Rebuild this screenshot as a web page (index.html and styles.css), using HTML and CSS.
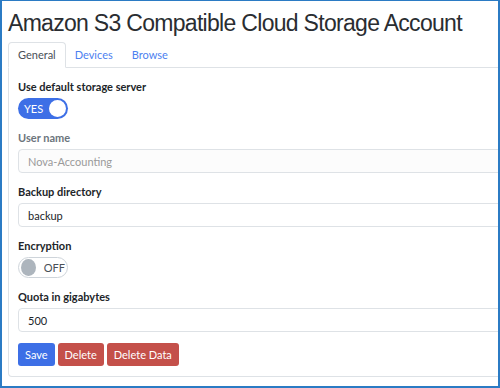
FILE: index.html
```html
<!DOCTYPE html>
<html lang="en">
<head>
  <meta charset="UTF-8">
  <title>Amazon S3 Compatible Cloud Storage Account</title>
  <link rel="stylesheet" href="styles.css">
</head>
<body>
  <div class="frame">
    <h1>Amazon S3 Compatible Cloud Storage Account</h1>
    <ul class="tabs">
      <li class="tab active">General</li>
      <li class="tab">Devices</li>
      <li class="tab">Browse</li>
    </ul>
    <div class="panel">
      <div class="field">
        <label>Use default storage server</label>
        <div class="toggle on"><span class="toggle-text">YES</span><span class="knob"></span></div>
      </div>
      <div class="field">
        <label class="disabled">User name</label>
        <input type="text" value="Nova-Accounting" disabled>
      </div>
      <div class="field">
        <label>Backup directory</label>
        <input type="text" value="backup">
      </div>
      <div class="field">
        <label>Encryption</label>
        <div class="toggle off"><span class="knob"></span><span class="toggle-text">OFF</span></div>
      </div>
      <div class="field">
        <label>Quota in gigabytes</label>
        <input type="text" value="500">
      </div>
      <div class="buttons">
        <button class="btn save">Save</button>
        <button class="btn danger">Delete</button>
        <button class="btn danger">Delete Data</button>
      </div>
    </div>
  </div>
</body>
</html>
```
FILE: styles.css
```css
* {
  box-sizing: border-box;
}
body {
  margin: 0;
  font-family: "Lato", "Noto Sans", sans-serif;
  font-size: 11px;
  color: #212529;
  background: #fff;
}
.frame {
  width: 500px;
  height: 388px;
  border: 2px solid #2b7bc4;
  border-top-width: 1px;
  overflow: hidden;
  padding: 7px 0 0 6px;
}
h1 {
  margin: 0 0 4px;
  font-family: "Liberation Sans", Arial, sans-serif;
  font-size: 23px;
  letter-spacing: -0.7px;
  line-height: 30px;
  font-weight: 400;
  white-space: nowrap;
  color: #2a2d31;
}
.tabs {
  display: flex;
  list-style: none;
  margin: 0;
  padding: 0;
  width: 600px;
  border-bottom: 1px solid #dee2e6;
}
.tab {
  padding: 5px 9px;
  line-height: 14px;
  margin-bottom: -1px;
  border: 1px solid transparent;
  border-radius: 4px 4px 0 0;
  color: #4d7ff0;
}
.tab + .tab {
  margin-left: -1px;
}
.tab.active {
  color: #495057;
  background: #fff;
  border-color: #dee2e6 #dee2e6 #fff;
}
.panel {
  width: 600px;
  border: 1px solid #dee2e6;
  border-top: none;
  border-radius: 0 0 4px 4px;
  padding: 11px 9px 10px;
}
.field {
  margin-bottom: 11px;
}
.field label {
  display: block;
  font-weight: 700;
  line-height: 15px;
  margin-bottom: 4px;
}
.field label.disabled {
  color: #6c757d;
}
.field input {
  display: block;
  width: 100%;
  height: 24px;
  padding: 0 9px;
  font: inherit;
  color: #212529;
  border: 1px solid #dee2e6;
  border-radius: 4px;
  background: #fff;
}
.field input:disabled {
  color: #9a9a9a;
  background: #fcfcfc;
}
.toggle {
  display: flex;
  align-items: center;
  width: 50px;
  height: 21px;
  border-radius: 11px;
  padding: 0 2px;
}
.toggle.on {
  background: #3d6fe6;
  color: #fff;
  justify-content: space-between;
  padding-left: 6px;
}
.toggle.off {
  border: 1px solid #ced4da;
  color: #495057;
  gap: 8px;
}
.knob {
  width: 17px;
  height: 17px;
  border-radius: 50%;
  background: #fff;
}
.toggle.off .knob {
  background: #adb5bd;
}
.buttons {
  display: flex;
  gap: 3px;
}
.btn {
  height: 23px;
  padding: 0 7px;
  font: inherit;
  color: #fff;
  border: none;
  border-radius: 3px;
}
.btn.save {
  background: #3d6fe6;
}
.btn.danger {
  background: #c4504a;
}
```
